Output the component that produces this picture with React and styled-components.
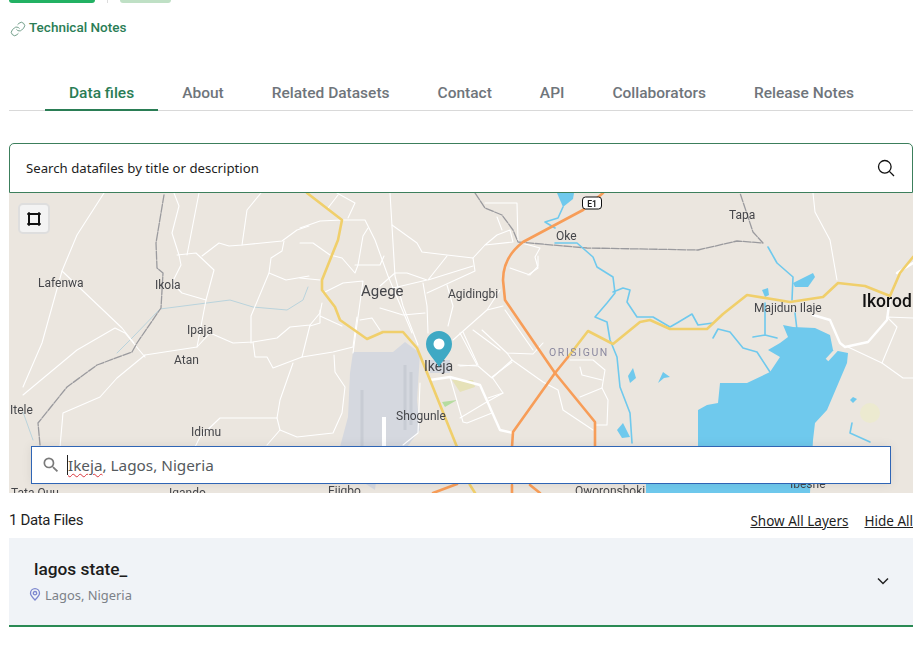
import React from 'react'
import styled, { createGlobalStyle } from 'styled-components'
import { MdSearch } from 'react-icons/md'
import { Link as LinkIcon } from 'lucide-react'

const uiFont = '"Noto Sans", "Open Sans", sans-serif'
const headFont = 'Roboto, "Liberation Sans", sans-serif'
const green = '#2a7d55'

const GlobalStyle = createGlobalStyle`
  html, body {
    margin: 0;
    background: #fff;
  }
`

const Page = styled.div`
  padding: 0 1px 0 9px;
  height: 661px;
  box-sizing: border-box;
  overflow: hidden;
`

const TopActions = styled.div`
  display: flex;
  height: 3px;
`

const PrimaryStub = styled.div`
  width: 86px;
  background: #22b163;
  border-radius: 0 0 3px 3px;
`

const Separator = styled.div`
  width: 1px;
  margin: 0 12px;
  background: #dddddd;
`

const SecondaryStub = styled.div`
  width: 51px;
  background: #bfe0c5;
  border-radius: 0 0 3px 3px;
`

const NotesLink = styled.a`
  display: flex;
  align-items: center;
  gap: 3px;
  margin: 15px 0 0 1px;
  height: 17px;
  font: 500 13.5px ${headFont};
  color: ${green};
  svg {
    margin-top: 4px;
    color: #5d9079;
  }
`

const TabBar = styled.nav`
  display: flex;
  margin-top: 40px;
  padding-left: 36px;
  border-bottom: 1px solid #d9d9d9;
`

const Tab = styled.div`
  padding: 0 24px;
  height: 36px;
  box-sizing: border-box;
  font: 500 15.5px/36px ${headFont};
  color: ${p => (p.$active ? green : '#6f757b')};
  border-bottom: 2px solid ${p => (p.$active ? green : 'transparent')};
  margin-bottom: -1px;
`

const SearchBar = styled.div`
  display: flex;
  align-items: center;
  justify-content: space-between;
  box-sizing: border-box;
  height: 50px;
  margin-top: 32px;
  padding: 0 17px 0 16px;
  border: 1px solid #3c7f5c;
  border-radius: 5px 5px 0 0;
  font: 400 13.2px ${uiFont};
  color: #1d1d1d;
`

const MapFrame = styled.div`
  position: relative;
  height: 300px;
  overflow: hidden;
  background: #ebe6df;
`

const MapDrawing = styled.svg`
  display: block;
  width: 100%;
  height: 100%;
  filter: blur(0.35px);
`

const MapLabel = styled.text`
  font-family: ${headFont};
  font-size: ${p => p.$size || 12}px;
  font-weight: ${p => p.$weight || 400};
  letter-spacing: ${p => p.$spacing || 0}px;
  fill: ${p => p.$color || '#45464a'};
`

const DrawButton = styled.button`
  position: absolute;
  left: 9px;
  top: 10px;
  width: 32px;
  height: 31px;
  padding: 0;
  display: flex;
  align-items: center;
  justify-content: center;
  background: #f3f3f3;
  border: 2px solid #dedede;
  border-radius: 5px;
`

const PlaceSearch = styled.div`
  position: absolute;
  left: 22px;
  top: 253px;
  width: 860px;
  height: 38px;
  box-sizing: border-box;
  display: flex;
  align-items: center;
  gap: 6px;
  padding: 0 9px;
  background: #fff;
  border: 1px solid #2f65b5;
  box-shadow: 0 0 10px rgba(0, 0, 0, 0.08);
  font: 400 15.3px ${uiFont};
  color: #555a5e;
  svg {
    color: #7a7a7a;
  }
`

const Typed = styled.span`
  border-left: 1px solid #222;
  text-decoration: underline wavy #d9363e 1px;
  text-underline-offset: 2px;
`

const FilesHeader = styled.div`
  display: flex;
  align-items: center;
  justify-content: space-between;
  height: 45px;
  box-sizing: border-box;
  padding-top: 8px;
`

const FilesCount = styled.div`
  font: 400 15px ${headFont};
  letter-spacing: -0.35px;
  color: #1f1f1f;
`

const LayerLinks = styled.div`
  display: flex;
  gap: 16px;
  padding-top: 3px;
`

const LayerLink = styled.a`
  font: 400 13.5px ${uiFont};
  color: #1f1f1f;
  text-decoration: underline;
`

const FileCard = styled.div`
  display: flex;
  align-items: center;
  justify-content: space-between;
  height: 89px;
  box-sizing: border-box;
  padding: 0 24px 1px 25px;
  background: #f0f3f7;
  border-bottom: 2px solid #2a8a54;
`

const FileTitle = styled.div`
  font: 500 17.3px ${headFont};
  color: #1c1c1c;
`

const FileMeta = styled.div`
  display: flex;
  align-items: center;
  gap: 4px;
  margin: 7px 0 0 -5px;
  font: 400 12.9px ${uiFont};
  color: #7c8188;
`

// everything in the map uses page coordinates, viewBox starts at the map corner
const thinRoads = [
  'M104 193L77 235L62 271L42 343L23 387',
  'M23 395L77 350L115 328L125 333L145 357',
  'M62 271L122 328L134 343',
  'M174 193L179 206L172 233L179 255L181 265L172 283L182 293L206 300L214 270L196 253L177 255',
  'M199 193L187 255',
  'M202 256L219 243L229 246L242 245L282 241L297 230L309 226',
  'M242 245L247 210L261 193',
  'M284 241L282 251L271 258L269 273L251 316L251 343',
  'M269 273L286 280L309 276',
  'M145 355L197 347L206 300',
  'M197 347L210 333L233 343L253 342L277 338L290 327L310 325L320 313L322 303',
  'M310 325L302 357L333 352L353 347L357 317',
  'M253 342L255 357L267 357L273 368L302 357',
  'M293 363L280 400L277 418L220 418L200 437L195 447',
  'M277 418L280 430L297 437L333 433L342 413L345 387L335 372L334 355',
  'M280 430L267 445',
  'M60 447L63 413L100 397L117 378L145 355',
  'M300 228L320 221L342 220L365 220L375 240L388 276L412 333',
  'M337 193L355 203L348 218M328 208L338 195',
  'M390 193L395 276L403 306L418 345',
  'M392 225L417 243L422 252L447 255L473 258L475 271L427 293',
  'M473 258L485 245L513 242M485 245L497 235L510 230L513 242',
  'M428 280L473 266M428 280L447 256',
  'M380 286L395 273L407 273L427 280L393 288',
  'M423 283L427 306L428 333',
  'M300 243L313 243L330 255L342 258L355 273L358 265L363 236L368 228',
  'M355 265L380 265L384 256',
  'M300 278L320 280',
  'M323 293L343 283L363 281L353 353',
  'M320 310L320 323L310 326M320 316L342 326',
  'M360 320L372 318L380 330M380 308L390 311L403 315L425 313',
  'M448 326L453 306L447 285',
  'M453 340L487 310L503 306M500 290L487 310',
  'M505 310L533 350M473 330L500 350',
  'M510 268L530 275L538 266L538 256',
  'M485 203L517 203L518 242M497 217L502 230',
  'M518 242L540 248L535 257L538 268L528 275',
  'M463 332L478 365M482 330L507 353L533 354L543 343',
  'M458 365L478 366L492 378L512 360',
  'M507 353L512 360L543 382L558 390L563 410L593 430',
  'M460 333L477 365L460 366M512 362L492 377L503 393L485 403L460 418',
  'M570 360L593 360L605 370L602 388L580 397M580 367L582 375L602 380',
  'M602 388L608 400L607 425L595 425',
  'M848 347L882 363L903 378L913 378',
  'M882 363L897 327L887 317L913 318',
  'M813 193L815 212L830 240L837 280',
  'M420 383L418 433L403 445',
  'M450 377L463 422L467 423L492 413M488 398L503 393'
]

const wideRoads = [
  'M430 380L450 377L480 385L500 430L513 433',
  'M813 315L830 320L840 343L845 347L868 342L887 320L890 297',
  'M897 273L913 263'
]

const rails = [
  'M475 193L485 208L502 215L513 230L518 242L587 248L698 250L737 241L763 243L753 232L740 193',
  'M164 195L156 243L157 268L163 273L161 308L137 343L132 352L97 365L67 387L38 423L40 445'
]

const thinWater = [
  'M308 287L303 300L287 310L253 307L230 300L160 309L133 337L117 353',
  'M23 412L33 440'
]

const rivers = [
  'M563 207L558 218L545 222L555 228M555 243L577 243L593 257L597 267L613 277L615 293L607 303L595 317L607 322L610 340L617 357L620 387L630 413L632 443',
  'M613 292L623 288L630 290L627 302L637 317L653 317L670 327L677 323L692 314L698 325L713 323',
  'M713 338L718 329L730 332L743 348L757 352L770 372',
  'M765 303L765 335L753 337M765 335L777 338',
  'M795 313L797 330',
  'M768 247L777 263L793 277L792 300',
  'M852 423L850 433L870 442'
]

const waterBlobs = [
  'M830 335L833 350L848 353L847 363L827 410L815 423L813 440L810 493L646 493L646 484L698 447L698 410L707 405L718 403L720 383L747 383L770 372L780 357L768 350L780 343L788 337L783 325L793 327L815 328Z',
  'M557 193L574 193L573 199L563 207Z',
  'M633 368L636 378L630 383L628 376Z',
  'M663 372L670 377L664 378L658 383Z',
  'M793 283L813 273L815 277L808 287L795 287Z',
  'M762 290L768 288L769 295L765 297Z',
  'M853 397L857 399L853 403L850 400Z',
  'M617 430L623 423L630 437L622 438Z'
]

const labels = [
  { text: 'Lafenwa', x: 38, y: 287 },
  { text: 'Ikola', x: 155, y: 289 },
  { text: 'Ipaja', x: 187, y: 334 },
  { text: 'Atan', x: 174, y: 364 },
  { text: 'Itele', x: 10, y: 414 },
  { text: 'Idimu', x: 191, y: 436 },
  { text: 'Agege', x: 361, y: 296, size: 15 },
  { text: 'Agidingbi', x: 448, y: 298 },
  { text: 'Oke', x: 556, y: 240 },
  { text: 'Tapa', x: 729, y: 219 },
  { text: 'Majidun Ilaje', x: 754, y: 312 },
  { text: 'Ikorod', x: 862, y: 307, size: 17.5, weight: 500, color: '#111' },
  { text: 'ORISIGUN', x: 549, y: 356, size: 10.5, spacing: 1.6, color: '#8b89a0' },
  { text: 'Ikeja', x: 424, y: 371, size: 14 },
  { text: 'Shogunle', x: 396, y: 420 },
  { text: 'Tata Quu', x: 11, y: 497 },
  { text: 'Igando', x: 169, y: 497 },
  { text: 'Ejigbo', x: 328, y: 495 },
  { text: 'Oworonshoki', x: 575, y: 495 },
  { text: 'Ibeshe', x: 790, y: 488 }
]

const RoadLayer = ({ paths, color, width, dash }) => (
  <g fill="none" stroke={color} strokeWidth={width} strokeDasharray={dash} strokeLinejoin="round" strokeLinecap="round">
    {paths.map(d => <path key={d} d={d} />)}
  </g>
)

const MapArt = () => (
  <MapDrawing viewBox="9 193 904 300" preserveAspectRatio="none">
    <path d="M405 342L393 352L353 352L350 373L348 417L340 447L345 470L375 490L380 447L407 447L420 430L417 400L420 353Z" fill="#d5d8df" />
    <path d="M362 390V447M405 365V430M411 372V425" stroke="#c8ccd4" strokeWidth="3" fill="none" />
    <path d="M384 417V447" stroke="#fff" strokeWidth="4" />
    <path d="M430 360H450V373H430Z" fill="#d5d8df" />
    <path d="M452 380L473 380L475 387L460 392Z" fill="#e6e2b8" />
    <path d="M442 402L457 400L445 407Z" fill="#b5dc9f" />
    <circle cx="870" cy="413" r="10" fill="#ecead0" />
    <RoadLayer paths={thinWater} color="#b9d3dc" width={1} />
    <RoadLayer paths={thinRoads} color="#ffffff" width={1.1} />
    <RoadLayer paths={wideRoads} color="#ffffff" width={2.4} />
    <RoadLayer paths={rails} color="#9a9a9e" width={1.3} dash="8 1.5" />
    <RoadLayer paths={rivers} color="#6fc9ed" width={1.6} />
    {waterBlobs.map(d => <path key={d} d={d} fill="#6fc9ed" />)}
    <path d="M827 360L838 348" stroke="#ebe6df" strokeWidth="3.5" />
    <RoadLayer
      color="#f0cf6b"
      width={2.6}
      paths={[
        'M307 193L342 220L338 240L322 280L322 290L335 307L340 320L367 339L383 332L403 332L417 348L430 380L457 447L470 485L475 493',
        'M568 357L588 331L613 344L640 322L650 320L670 329L707 329L723 314L747 295L790 302L823 297L838 283L865 286L890 296L900 273L913 257'
      ]}
    />
    <RoadLayer
      color="#f79d58"
      width={2.6}
      paths={[
        'M603 193L583 210L523 242C510 252 503 265 503 280L505 300L555 373L595 422L595 447',
        'M512 447L513 432L555 373L568 357',
        'M512 485V493M530 485L540 493M433 493L457 484'
      ]}
    />
    <rect x="582.5" y="197" width="19" height="12" rx="3" fill="#fff" stroke="#111" />
    <MapLabel x="592" y="206.5" textAnchor="middle" $size={8.5} $weight={700} $color="#222">E1</MapLabel>
    {labels.map(l => (
      <MapLabel key={l.text} x={l.x} y={l.y} $size={l.size} $weight={l.weight} $spacing={l.spacing} $color={l.color}>
        {l.text}
      </MapLabel>
    ))}
    <path d="M439 367C434 358 426 353 426 344A13 13 0 0 1 452 344C452 353 444 358 439 367Z" fill="#3fa9c4" />
    <circle cx="439" cy="344" r="5.5" fill="#fff" />
  </MapDrawing>
)

const tabs = ['Data files', 'About', 'Related Datasets', 'Contact', 'API', 'Collaborators', 'Release Notes']

export default function App() {
  return (
    <Page>
      <GlobalStyle />
      <TopActions>
        <PrimaryStub />
        <Separator />
        <SecondaryStub />
      </TopActions>
      <NotesLink>
        <LinkIcon size={16} strokeWidth={1.3} />
        Technical Notes
      </NotesLink>
      <TabBar>
        {tabs.map((t, i) => <Tab key={t} $active={i === 0}>{t}</Tab>)}
      </TabBar>
      <SearchBar>
        Search datafiles by title or description
        <svg width="18" height="18" viewBox="0 0 18 18" fill="none" stroke="#111" strokeWidth="1.3">
          <circle cx="7.8" cy="7.8" r="6.3" />
          <path d="M12.4 12.4L17 17" />
        </svg>
      </SearchBar>
      <MapFrame>
        <MapArt />
        <DrawButton>
          <svg width="14" height="14" viewBox="0 0 14 14" fill="#111" stroke="#111">
            <rect x="2" y="2" width="10" height="10" fill="none" strokeWidth="2" />
            <circle cx="2" cy="2" r="1.3" />
            <circle cx="12" cy="2" r="1.3" />
            <circle cx="2" cy="12" r="1.3" />
            <circle cx="12" cy="12" r="1.3" />
          </svg>
        </DrawButton>
        <PlaceSearch>
          <MdSearch size={20} />
          <span><Typed>Ikeja</Typed>, Lagos, Nigeria</span>
        </PlaceSearch>
      </MapFrame>
      <FilesHeader>
        <FilesCount>1 Data Files</FilesCount>
        <LayerLinks>
          <LayerLink>Show All Layers</LayerLink>
          <LayerLink>Hide All</LayerLink>
        </LayerLinks>
      </FilesHeader>
      <FileCard>
        <div>
          <FileTitle>lagos state_</FileTitle>
          <FileMeta>
            <svg width="12" height="13" viewBox="0 0 12 13" fill="none" stroke="#7b86cf" strokeWidth="1.3">
              <path d="M6 12C3.5 9.5 1.5 7.5 1.5 5.2A4.5 4.5 0 0 1 10.5 5.2C10.5 7.5 8.5 9.5 6 12Z" />
              <circle cx="6" cy="5.2" r="1.7" />
            </svg>
            Lagos, Nigeria
          </FileMeta>
        </div>
        <svg width="12" height="8" viewBox="0 0 12 8" fill="none" stroke="#222" strokeWidth="1.5">
          <path d="M1 1.5L6 6.5L11 1.5" />
        </svg>
      </FileCard>
    </Page>
  )
}
